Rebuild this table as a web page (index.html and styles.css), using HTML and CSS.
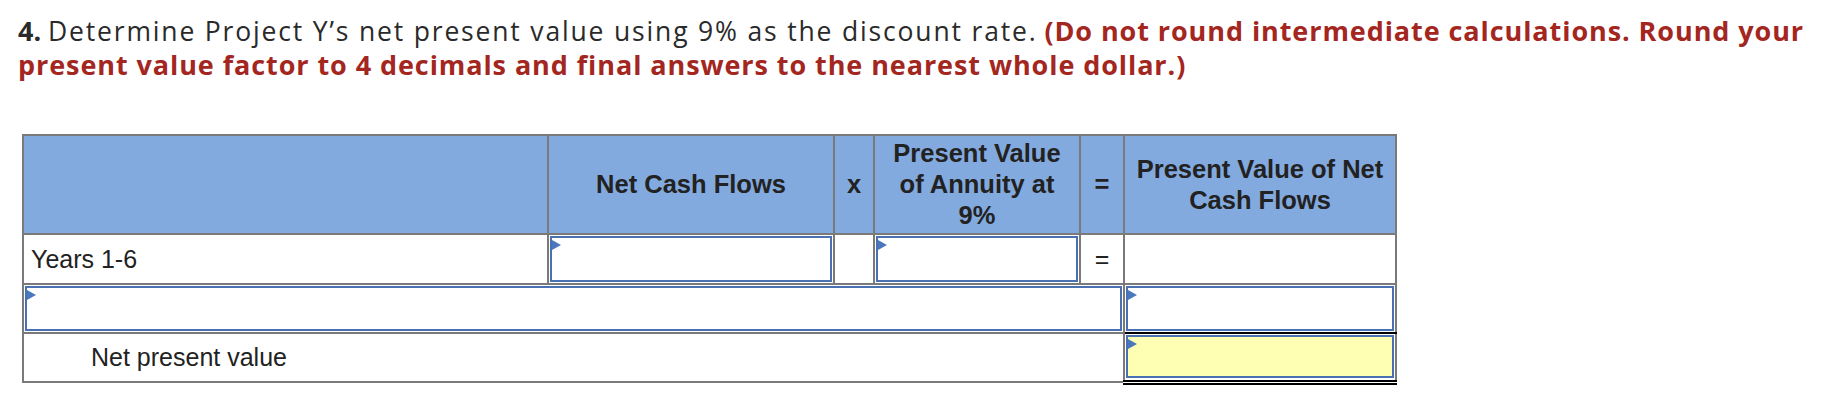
FILE: index.html
```html
<!DOCTYPE html>
<html lang="en">
<head>
<meta charset="utf-8">
<title>Project Y NPV</title>
<link rel="stylesheet" href="styles.css">
</head>
<body>
<div class="page">
  <p class="question"><b class="num">4.</b> <span class="lead">Determine Project Y’s net present value using 9% as the discount rate.</span> <strong class="note">(Do not round intermediate calculations. Round your present value factor to 4 decimals and final answers to the nearest whole dollar.)</strong></p>
  <table class="npv">
    <colgroup>
      <col class="c-label">
      <col class="c-flow">
      <col class="c-op">
      <col class="c-factor">
      <col class="c-eq">
      <col class="c-pv">
    </colgroup>
    <thead>
      <tr>
        <th></th>
        <th>Net Cash Flows</th>
        <th>x</th>
        <th>Present Value of Annuity at 9%</th>
        <th>=</th>
        <th>Present Value of Net Cash Flows</th>
      </tr>
    </thead>
    <tbody>
      <tr class="r1">
        <td class="label">Years 1-6</td>
        <td class="in"><div class="field"></div></td>
        <td></td>
        <td class="in"><div class="field"></div></td>
        <td class="op">=</td>
        <td></td>
      </tr>
      <tr class="r2">
        <td class="in" colspan="5"><div class="field"></div></td>
        <td class="in total"><div class="field"></div></td>
      </tr>
      <tr class="r3">
        <td class="label indent" colspan="5">Net present value</td>
        <td class="in grand"><div class="field yellow"></div></td>
      </tr>
    </tbody>
  </table>
</div>
</body>
</html>
```

FILE: styles.css
```css
html, body {
  margin: 0;
  background: #ffffff;
}

.page {
  padding: 14px 0 0 18px;
}

.question {
  margin: 0;
  font-family: "Open Sans", Lato, sans-serif;
  font-size: 26.5px;
  line-height: 34px;
  color: #2a2a2a;
}

.lead {
  letter-spacing: 1.83px;
}

.num,
.note {
  font-size: 27px;
  font-weight: 700;
}

.note {
  color: #a3261f;
  letter-spacing: 0.92px;
}

.npv {
  margin: 52px 0 0 4px;
  border-collapse: collapse;
  table-layout: fixed;
  width: 1374px;
  font-family: "Liberation Sans", Arial, sans-serif;
  font-size: 25px;
  color: #222222;
}

.c-label { width: 525px; }
.c-flow { width: 286px; }
.c-op { width: 40px; }
.c-factor { width: 206px; }
.c-eq { width: 44px; }
.c-pv { width: 272px; }

.npv th,
.npv td {
  border: 2px solid #7a7a7a;
  padding: 1px;
}

.npv th {
  background: #83aadf;
  font-size: 25.5px;
  font-weight: 700;
  line-height: 31px;
  padding: 0 8px;
  height: 97px;
  text-align: center;
  vertical-align: middle;
}

.npv td {
  vertical-align: middle;
}

.npv td.label {
  padding: 0 7px;
  height: 47px;
}

.npv td.indent {
  padding-left: 67px;
}

.npv td.op {
  text-align: center;
}

.field {
  position: relative;
  box-sizing: border-box;
  border: 2px solid #4a72b2;
  background: #ffffff;
}

.field::before {
  content: "";
  position: absolute;
  left: 0;
  top: 2px;
  border-left: 9px solid #4a78be;
  border-top: 5px solid transparent;
  border-bottom: 5px solid transparent;
}

.r1 .field { height: 46px; }
.r2 .field { height: 45px; }
.r3 .field { height: 43px; }

.npv td.total {
  border-bottom-color: #000000;
}

.npv td.grand {
  border-bottom: 5px double #000000;
}

.yellow {
  background: #ffffb4;
}
```
